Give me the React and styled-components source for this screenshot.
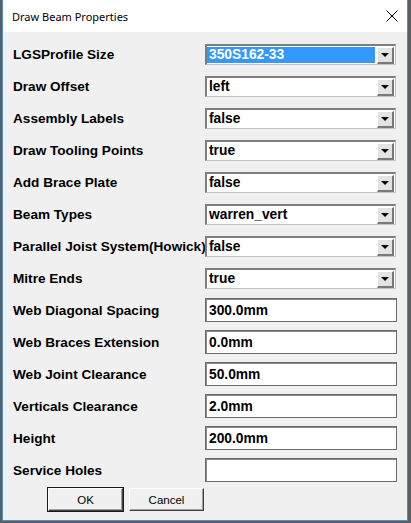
import React from "react";
import styled, { createGlobalStyle } from "styled-components";

const GlobalStyle = createGlobalStyle`
  html, body {
    margin: 0;
    padding: 0;
    background: #5b5f63;
  }
  #root {
    width: 411px;
    height: 523px;
    overflow: hidden;
  }
`;

const Window = styled.div`
  margin-left: 2px;
  width: 404px;
  height: 520px;
  border: 1px solid #4f8fd0;
  border-top: none;
  background: #f0f0f0;
  display: flex;
  flex-direction: column;
`;

const TitleBar = styled.div`
  height: 32px;
  background: #ffffff;
  display: flex;
  align-items: center;
  justify-content: space-between;
  padding: 0 8px 0 9px;
  font-family: "Noto Sans", "Open Sans", sans-serif;
  font-size: 11px;
  color: #000;
`;

const CloseButton = styled.div`
  width: 14px;
  height: 14px;
  display: flex;
  align-items: center;
  justify-content: center;
`;

const Form = styled.div`
  padding: 6px 0 0 10px;
  display: grid;
  grid-template-columns: 192px 192px;
  grid-auto-rows: 32px;
`;

const Label = styled.div`
  display: flex;
  align-items: center;
  font-family: "Liberation Sans", Arial, sans-serif;
  font-weight: bold;
  font-size: 13.6px;
  color: #000;
  white-space: nowrap;
`;

const Cell = styled.div`
  display: flex;
  align-items: center;
`;

const Combo = styled.div`
  width: 191px;
  height: 21px;
  box-sizing: border-box;
  background: #ffffff;
  border-top: 2px solid #7e7e7e;
  border-left: 2px solid #7e7e7e;
  border-right: 1px solid #c4c4c4;
  border-bottom: 1px solid #c4c4c4;
  display: flex;
  align-items: stretch;
  padding: 1px 1px 0 0;
`;

const ComboValue = styled.div`
  flex: 1;
  margin: 0 2px 1px 0;
  display: flex;
  align-items: center;
  padding-left: 2px;
  font-family: "Liberation Sans", Arial, sans-serif;
  font-weight: bold;
  font-size: 13.8px;
  background: ${(p) => (p.$selected ? "#3399ff" : "transparent")};
  color: ${(p) => (p.$selected ? "#ffffff" : "#000000")};
`;

const DropButton = styled.div`
  width: 17px;
  box-sizing: border-box;
  background: #e3e3e3;
  border-top: 1px solid #ffffff;
  border-left: 1px solid #ffffff;
  border-right: 2px solid #7a7a7a;
  border-bottom: 2px solid #7a7a7a;
  display: flex;
  align-items: center;
  justify-content: center;
`;

const Arrow = styled.div`
  width: 0;
  height: 0;
  border-left: 4px solid transparent;
  border-right: 4px solid transparent;
  border-top: 4px solid #000;
`;

const TextBox = styled.div`
  width: 192px;
  height: 24px;
  box-sizing: border-box;
  background: #ffffff;
  border: 1px solid #6a6a6a;
  box-shadow: inset 1px 1px 0 #8a8a8a;
  display: flex;
  align-items: center;
  padding-left: 3px;
  font-family: "Liberation Sans", Arial, sans-serif;
  font-weight: bold;
  font-size: 13.8px;
  color: #000;
`;

const ButtonRow = styled.div`
  display: flex;
  gap: 6px;
  padding: 2px 0 0 45px;
`;

const Button = styled.div`
  width: 75px;
  height: 23px;
  box-sizing: border-box;
  background: #f0f0f0;
  border-top: 1px solid #ffffff;
  border-left: 1px solid #ffffff;
  border-right: 1px solid #404040;
  border-bottom: 1px solid #404040;
  box-shadow: ${(p) =>
    p.$default
      ? "inset -1px -1px 0 #a0a0a0, 0 0 0 1px #1a1a1a"
      : "inset -1px -1px 0 #a0a0a0"};
  display: flex;
  align-items: center;
  justify-content: center;
  font-family: "Liberation Sans", Arial, sans-serif;
  font-size: 11.5px;
  color: #000;
`;

const rows = [
  { label: "LGSProfile Size", type: "combo", value: "350S162-33", selected: true },
  { label: "Draw Offset", type: "combo", value: "left" },
  { label: "Assembly Labels", type: "combo", value: "false" },
  { label: "Draw Tooling Points", type: "combo", value: "true" },
  { label: "Add Brace Plate", type: "combo", value: "false" },
  { label: "Beam Types", type: "combo", value: "warren_vert" },
  { label: "Parallel Joist System(Howick)", type: "combo", value: "false" },
  { label: "Mitre Ends", type: "combo", value: "true" },
  { label: "Web Diagonal Spacing", type: "text", value: "300.0mm" },
  { label: "Web Braces Extension", type: "text", value: "0.0mm" },
  { label: "Web Joint Clearance", type: "text", value: "50.0mm" },
  { label: "Verticals Clearance", type: "text", value: "2.0mm" },
  { label: "Height", type: "text", value: "200.0mm" },
  { label: "Service Holes", type: "text", value: "" },
];

export default function App() {
  return (
    <>
      <GlobalStyle />
      <Window>
        <TitleBar>
          <span>Draw Beam Properties</span>
          <CloseButton>
            <svg width="12" height="12" viewBox="0 0 12 12">
              <path d="M0.5 0.5 L11.5 11.5 M11.5 0.5 L0.5 11.5" stroke="#000" strokeWidth="1" />
            </svg>
          </CloseButton>
        </TitleBar>

        <Form>
          {rows.map((r) => (
            <React.Fragment key={r.label}>
              <Label>{r.label}</Label>
              <Cell>
                {r.type === "combo" ? (
                  <Combo>
                    <ComboValue $selected={r.selected}>{r.value}</ComboValue>
                    <DropButton>
                      <Arrow />
                    </DropButton>
                  </Combo>
                ) : (
                  <TextBox>{r.value}</TextBox>
                )}
              </Cell>
            </React.Fragment>
          ))}
        </Form>

        <ButtonRow>
          <Button $default>OK</Button>
          <Button>Cancel</Button>
        </ButtonRow>
      </Window>
    </>
  );
}
